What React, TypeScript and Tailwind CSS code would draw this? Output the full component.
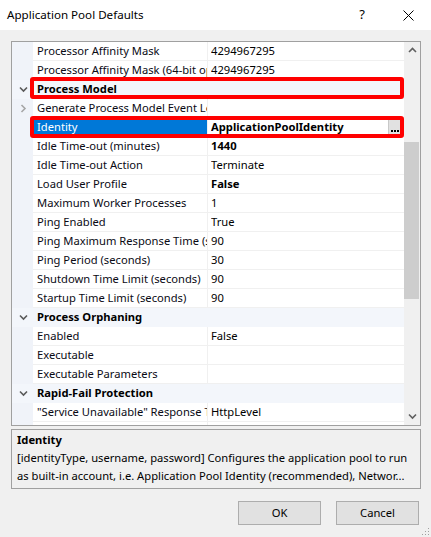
import React from 'react'

type Row =
  | { kind: 'cat'; label: string }
  | { kind: 'prop'; name: string; value?: string; bold?: boolean; expander?: boolean; selected?: boolean }

const rows: Row[] = [
  { kind: 'prop', name: 'Processor Affinity Mask', value: '4294967295' },
  { kind: 'prop', name: 'Processor Affinity Mask (64-bit option)', value: '4294967295' },
  { kind: 'cat', label: 'Process Model' },
  { kind: 'prop', name: 'Generate Process Model Event Log Entry', expander: true },
  { kind: 'prop', name: 'Identity', value: 'ApplicationPoolIdentity', bold: true, selected: true },
  { kind: 'prop', name: 'Idle Time-out (minutes)', value: '1440', bold: true },
  { kind: 'prop', name: 'Idle Time-out Action', value: 'Terminate' },
  { kind: 'prop', name: 'Load User Profile', value: 'False', bold: true },
  { kind: 'prop', name: 'Maximum Worker Processes', value: '1' },
  { kind: 'prop', name: 'Ping Enabled', value: 'True' },
  { kind: 'prop', name: 'Ping Maximum Response Time (seconds)', value: '90' },
  { kind: 'prop', name: 'Ping Period (seconds)', value: '30' },
  { kind: 'prop', name: 'Shutdown Time Limit (seconds)', value: '90' },
  { kind: 'prop', name: 'Startup Time Limit (seconds)', value: '90' },
  { kind: 'cat', label: 'Process Orphaning' },
  { kind: 'prop', name: 'Enabled', value: 'False' },
  { kind: 'prop', name: 'Executable' },
  { kind: 'prop', name: 'Executable Parameters' },
  { kind: 'cat', label: 'Rapid-Fail Protection' },
  { kind: 'prop', name: '"Service Unavailable" Response Type', value: 'HttpLevel' },
  { kind: 'prop', name: 'Enabled', value: 'True' },
]

const Chevron = ({ dir, color }: { dir: 'down' | 'right' | 'up'; color: string }) => {
  const d = dir === 'down' ? 'M1 2.5 L4.5 6 L8 2.5' : dir === 'up' ? 'M1 6 L4.5 2.5 L8 6' : 'M2.5 1 L6 4.5 L2.5 8'
  return (
    <svg width="9" height="9" viewBox="0 0 9 9">
      <path d={d} fill="none" stroke={color} strokeWidth="1.6" />
    </svg>
  )
}

const GridRow = ({ row }: { row: Row }) => {
  if (row.kind === 'cat') {
    return (
      <div className="flex h-[19px] bg-[#f3f6fb]">
        <div className="w-[21px] flex items-center justify-center pl-[1px]">
          <Chevron dir="down" color="#5a5a5a" />
        </div>
        <div className="flex-1 pl-[4px] leading-[18px] font-bold text-black">{row.label}</div>
      </div>
    )
  }
  return (
    <div className="flex h-[19px]">
      <div className="w-[21px] bg-[#f0f3f9] flex items-center justify-center pl-[1px]">
        {row.expander && <Chevron dir="right" color="#a6a6a6" />}
      </div>
      <div className="flex border-b border-[#f0f0f0]">
        <div
          className={
            'w-[174px] h-[18px] pl-[4px] leading-[18px] whitespace-nowrap overflow-hidden ' +
            (row.selected ? 'bg-[#0078d7] text-white' : 'bg-white text-[#0a0a14]')
          }
        >
          {row.name}
        </div>
        <div className="w-[1px] bg-[#f0f0f0]" />
        <div className="w-[196px] h-[18px] bg-white flex items-center pl-[3px] pr-[2px]">
          <span className={'flex-1 leading-[18px] whitespace-nowrap overflow-hidden ' + (row.bold ? 'font-bold' : '')}>
            {row.value}
          </span>
          {row.selected && (
            <span className="w-[14px] h-[17px] bg-[#e1e1e1] border border-[#c8c8c8] flex items-end justify-center pb-[3px]">
              <svg width="8" height="2" viewBox="0 0 8 2">
                <rect x="0" y="0" width="2" height="2" fill="#000" />
                <rect x="3" y="0" width="2" height="2" fill="#000" />
                <rect x="6" y="0" width="2" height="2" fill="#000" />
              </svg>
            </span>
          )}
        </div>
      </div>
    </div>
  )
}

export default function App() {
  return (
    <div
      className="w-[431px] h-[537px] bg-[#f0f0f0] flex flex-col text-[11.2px] text-black relative overflow-hidden"
      style={{ fontFamily: '"Noto Sans", "Open Sans", sans-serif' }}
    >
      {/* Title bar */}
      <div className="h-[30px] bg-white flex items-center pl-[7px]">
        <span className="flex-1 text-[11.6px]">Application Pool Defaults</span>
        <span className="w-[46px] text-center text-[13px] ml-[3px]">?</span>
        <span className="w-[46px] flex items-center justify-center">
          <svg width="11" height="11" viewBox="0 0 11 11">
            <path d="M0.5 0.5 L10.5 10.5 M10.5 0.5 L0.5 10.5" stroke="#000" strokeWidth="1" />
          </svg>
        </span>
      </div>

      <div className="pl-[11px] pt-[11px]">
        {/* Property grid */}
        <div className="w-[410px] h-[385px] border border-[#a0a0a0] flex bg-white">
          <div className="w-[392px] relative overflow-hidden">
            {rows.map((r, i) => (
              <GridRow key={i} row={r} />
            ))}
            <div className="absolute left-[18px] top-[35px] w-[374px] h-[22px] border-[4px] border-[#f00] rounded-[3px]" />
            <div className="absolute left-[18px] top-[74px] w-[374px] h-[22px] border-[4px] border-[#f00] rounded-[3px]" />
          </div>
          <div className="w-[16px] bg-[#f0f0f0] flex flex-col items-center">
            <div className="h-[17px] flex items-center justify-center">
              <Chevron dir="up" color="#606060" />
            </div>
            <div className="h-[83px]" />
            <div className="w-[15px] h-[157px] bg-[#cdcdcd] self-start" />
            <div className="flex-1" />
            <div className="h-[17px] flex items-center justify-center">
              <Chevron dir="down" color="#606060" />
            </div>
          </div>
        </div>

        {/* Description */}
        <div className="w-[410px] h-[60px] mt-[3px] border border-[#a0a0a0] px-[5px] pt-[1px]">
          <div className="font-bold leading-[18px]">Identity</div>
          <div className="leading-[18px] whitespace-nowrap">
            [identityType, username, password] Configures the application pool to run
          </div>
          <div className="leading-[18px] whitespace-nowrap">
            as built-in account, i.e. Application Pool Identity (recommended), Networ...
          </div>
        </div>
      </div>

      {/* Buttons */}
      <div className="flex justify-end gap-[15px] pr-[12px] mt-[12px]">
        <button className="w-[83px] h-[24px] bg-[#e1e1e1] border border-[#adadad]">OK</button>
        <button className="w-[83px] h-[24px] bg-[#e1e1e1] border border-[#adadad]">Cancel</button>
      </div>

      {/* Size grip */}
      <svg className="absolute right-[1px] bottom-[1px]" width="9" height="9" viewBox="0 0 9 9">
        {[
          [7, 1],
          [7, 4],
          [4, 4],
          [7, 7],
          [4, 7],
          [1, 7],
        ].map(([x, y], i) => (
          <rect key={i} x={x} y={y} width="1" height="1" fill="#a0a0a0" />
        ))}
      </svg>
    </div>
  )
}
